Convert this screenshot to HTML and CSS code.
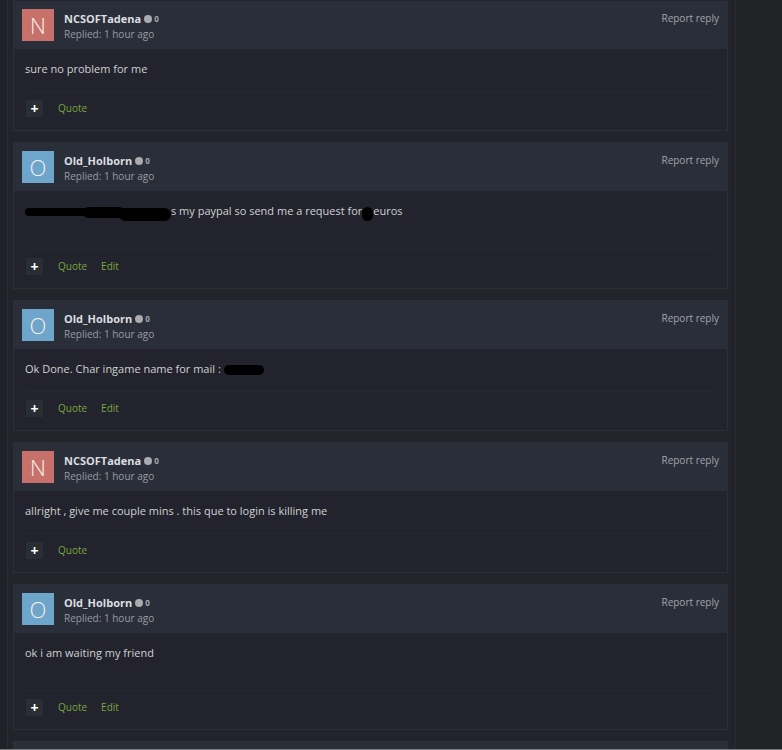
FILE: index.html
```html
<!DOCTYPE html>
<html>
<head>
<meta charset="utf-8">
<link rel="stylesheet" href="styles.css">
</head>
<body>
<div class="shell">
  <div class="strip"></div>
  <div class="main">
    <div class="card">
      <div class="head">
        <div class="avatar av-n">N</div>
        <div class="who">
          <div class="name">NCSOFTadena <span class="dot"></span><span class="rep">0</span></div>
          <div class="meta">Replied: 1 hour ago</div>
        </div>
        <a class="report">Report reply</a>
      </div>
      <div class="body">
        <div class="content"><p>sure no problem for me</p></div>
        <div class="actions"><span class="plus">+</span><a class="act">Quote</a></div>
      </div>
    </div>

    <div class="card">
      <div class="head">
        <div class="avatar av-o">O</div>
        <div class="who">
          <div class="name">Old_Holborn <span class="dot"></span><span class="rep">0</span></div>
          <div class="meta">Replied: 1 hour ago</div>
        </div>
        <a class="report">Report reply</a>
      </div>
      <div class="body">
        <div class="content tall"><p><span class="blot b1"></span><span class="blot b2"></span><span class="blot b3"></span>s my paypal so send me a request for<span class="blot b4"></span>euros</p></div>
        <div class="actions"><span class="plus">+</span><a class="act">Quote</a><a class="act">Edit</a></div>
      </div>
    </div>

    <div class="card">
      <div class="head">
        <div class="avatar av-o">O</div>
        <div class="who">
          <div class="name">Old_Holborn <span class="dot"></span><span class="rep">0</span></div>
          <div class="meta">Replied: 1 hour ago</div>
        </div>
        <a class="report">Report reply</a>
      </div>
      <div class="body">
        <div class="content"><p>Ok Done. Char ingame name for mail : <span class="blot b5"></span></p></div>
        <div class="actions"><span class="plus">+</span><a class="act">Quote</a><a class="act">Edit</a></div>
      </div>
    </div>

    <div class="card">
      <div class="head">
        <div class="avatar av-n">N</div>
        <div class="who">
          <div class="name">NCSOFTadena <span class="dot"></span><span class="rep">0</span></div>
          <div class="meta">Replied: 1 hour ago</div>
        </div>
        <a class="report">Report reply</a>
      </div>
      <div class="body">
        <div class="content"><p>allright , give me couple mins . this que to login is killing me</p></div>
        <div class="actions"><span class="plus">+</span><a class="act">Quote</a></div>
      </div>
    </div>

    <div class="card">
      <div class="head">
        <div class="avatar av-o">O</div>
        <div class="who">
          <div class="name">Old_Holborn <span class="dot"></span><span class="rep">0</span></div>
          <div class="meta">Replied: 1 hour ago</div>
        </div>
        <a class="report">Report reply</a>
      </div>
      <div class="body">
        <div class="content tall"><p>ok i am waiting my friend</p></div>
        <div class="actions"><span class="plus">+</span><a class="act">Quote</a><a class="act">Edit</a></div>
      </div>
    </div>

    <div class="card">
      <div class="head stub"></div>
    </div>
  </div>
</div>
<div class="shotline"></div>
</body>
</html>
```
FILE: styles.css
```css
html, body {
  margin: 0;
  padding: 0;
  background: #222327;
  font-family: "Open Sans", "Liberation Sans", sans-serif;
  height: 750px;
  overflow: hidden;
}
.shell {
  display: flex;
  align-items: stretch;
  min-height: 750px;
}
.strip {
  width: 7px;
  background: #202128;
  flex: none;
}
.main {
  width: 715px;
  flex: none;
  background: #22232b;
  border-left: 1px solid #2a2b33;
  border-right: 1px solid #2a2b33;
  padding: 0 7px 0 5px;
  display: flex;
  flex-direction: column;
  gap: 11px;
}
.card {
  border: 1px solid #2c2e38;
  background: #22232c;
}
.card:first-child {
  border-top: none;
  padding-top: 1px;
}
.head {
  background: #2a2e39;
  display: flex;
  align-items: flex-start;
  padding: 8px 8px;
  gap: 10px;
}
.stub {
  height: 32px;
}
.avatar {
  width: 32px;
  height: 32px;
  flex: none;
  color: #f6f0ec;
  font-size: 22px;
  line-height: 32px;
  text-align: center;
  font-weight: 300;
}
.av-n { background: #c8716a; }
.av-o { background: #6ea5cb; }
.who {
  flex: 1;
  padding-top: 2px;
}
.name {
  color: #dcdee1;
  font-size: 11px;
  font-weight: 700;
  line-height: 16px;
  display: flex;
  align-items: center;
}
.dot {
  display: inline-block;
  width: 8px;
  height: 8px;
  border-radius: 50%;
  background: #a9abaf;
  margin-left: 3px;
}
.rep {
  font-size: 8px;
  color: #a9abaf;
  margin-left: 2px;
  font-weight: 700;
}
.meta {
  color: #979ba3;
  font-size: 10px;
  line-height: 14px;
}
.report {
  color: #a0a4ab;
  font-size: 10px;
  line-height: 16px;
  padding-top: 1px;
}
.body {
  padding: 11px 10px 13px 11px;
}
.content p {
  margin: 0;
  color: #d0d1d3;
  font-size: 11px;
  line-height: 18px;
}
.content {
  margin-bottom: 13px;
}
.content.tall {
  padding-bottom: 15px;
}
.actions {
  border-top: 1px solid #262831;
  padding: 8px 0 0 1px;
  display: flex;
  align-items: center;
  gap: 15px;
}
.plus {
  width: 17px;
  height: 17px;
  background: #2b2d35;
  color: #ffffff;
  font-weight: 700;
  font-size: 14px;
  line-height: 17px;
  text-align: center;
}
.act {
  color: #7aa63e;
  font-size: 10px;
  line-height: 17px;
  margin-right: -1px;
}
.blot {
  display: inline-block;
  background: #000;
  vertical-align: middle;
}
.b1 { width: 62px; height: 8px; border-radius: 5px; }
.b2 { width: 42px; height: 11px; border-radius: 6px; margin-left: -4px; }
.b3 { width: 52px; height: 13px; border-radius: 7px; margin-left: -6px; margin-top: 4px; }
.b4 { width: 11px; height: 14px; border-radius: 6px; margin-top: 3px; }
.b5 { width: 40px; height: 10px; border-radius: 5px; margin-left: 0; }
.shotline {
  position: fixed;
  left: 0;
  right: 0;
  bottom: 0;
  height: 1px;
  background: #7a7b80;
}
```
